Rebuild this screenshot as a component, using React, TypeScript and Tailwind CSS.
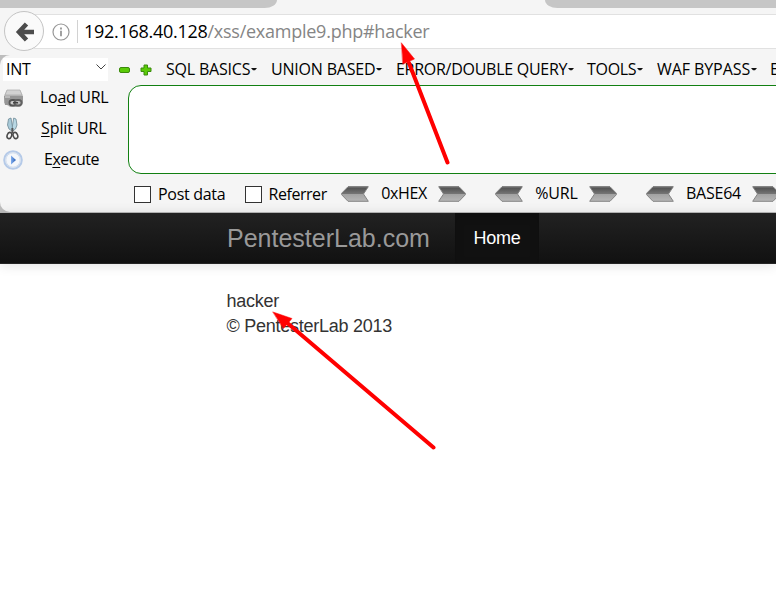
import React from "react";

const ui = "font-['Open_Sans','Noto_Sans',sans-serif] text-black whitespace-nowrap";

function Chevron({ flip = false, id }: { flip?: boolean; id: string }) {
  return (
    <svg width="28" height="16" viewBox="0 0 28 16" className={flip ? "shrink-0 -scale-x-100" : "shrink-0"}>
      <defs>
        <linearGradient id={id} x1="0" y1="0" x2="0" y2="1">
          <stop offset="0" stopColor="#4c4c4c" />
          <stop offset="0.48" stopColor="#747474" />
          <stop offset="0.52" stopColor="#a2a2a2" />
          <stop offset="1" stopColor="#b6b6b6" />
        </linearGradient>
      </defs>
      <path d="M7 .7H27.3L22.5 8l4.8 7.3H7L.6 8.700V7.300z" fill={`url(#${id})`} stroke="#858585" strokeWidth="1" />
      <path d="M7 1H27" stroke="#777" />
    </svg>
  );
}

function Encoder({ label, id, labelClass, className }: { label: string; id: string; labelClass: string; className: string }) {
  return (
    <div className={`flex shrink-0 items-center ${className}`}>
      <Chevron id={id + "l"} />
      <span className={`-mt-[2px] pl-px text-center ${labelClass}`}>{label}</span>
      <Chevron id={id + "r"} flip />
    </div>
  );
}

function Menu({ label, className }: { label: string; className: string }) {
  return (
    <div className={`flex shrink-0 items-center ${className}`}>
      <span>{label}</span>
      <svg width="6" height="3" viewBox="0 0 6 3" className="ml-px shrink-0">
        <path d="M0 0h6L4 2.200h-2z" fill="#111" />
      </svg>
    </div>
  );
}

function LoadIcon() {
  return (
    <svg width="21" height="19" viewBox="0 0 21 19" className="shrink-0">
      <path d="M4 1H17L20 7V15L17 18H7L1 14V7z" fill="#b8b8b8" />
      <path d="M4 1H17L19 6H2z" fill="#d2d2d2" stroke="#aaa" strokeWidth=".7" />
      <path d="M1 7H20V14L17 16H2z" fill="#969696" />
      <path d="M2 8H7" stroke="#dedede" strokeWidth="1.2" />
      <rect x="6.5" y="11" width="7" height="5.5" rx="2.700" fill="#ccc" stroke="#555" strokeWidth="1.8" />
      <rect x="11.500" y="11" width="7" height="5.5" rx="2.700" fill="#bbb" stroke="#606060" strokeWidth="1.8" />
      <path d="M10 13.700h5" stroke="#444" strokeWidth="1.5" />
    </svg>
  );
}

function ScissorsIcon() {
  return (
    <svg width="13" height="23" viewBox="0 0 13 23" className="shrink-0">
      <path d="M2.500 2 1.5 8 3 12 6 14 6.500 10 5 1z" fill="#a8cad9" stroke="#6d8996" strokeWidth=".8" />
      <path d="M10 2 11 8 9.500 12 6.800 14 6.300 10 7.700 1z" fill="#b9d8e4" stroke="#6d8996" strokeWidth=".8" />
      <path d="M6.4 11v5" stroke="#555" strokeWidth="2" />
      <ellipse cx="3.4" cy="18.5" rx="2.2" ry="3.2" fill="none" stroke="#4a4a4a" strokeWidth="1.6" transform="rotate(20 3.4 18.5)" />
      <ellipse cx="9.4" cy="18.5" rx="2.2" ry="3.2" fill="none" stroke="#4a4a4a" strokeWidth="1.6" transform="rotate(-20 9.4 18.5)" />
    </svg>
  );
}

function PlayIcon() {
  return (
    <svg width="20" height="20" viewBox="0 0 20 20" className="shrink-0">
      <defs>
        <linearGradient id="play" x1="0" y1="0" x2="1" y2="0">
          <stop offset="0" stopColor="#83aff0" />
          <stop offset="1" stopColor="#245bb0" />
        </linearGradient>
      </defs>
      <circle cx="10" cy="10" r="8.8" fill="#eef3fa" stroke="#b5cae8" strokeWidth="2" />
      <circle cx="10" cy="10" r="7.2" fill="#f4f7fb" stroke="#d0dcec" />
      <path d="M8 5.5v9l5-4.5z" fill="url(#play)" />
    </svg>
  );
}

export default function App() {
  return (
    <div className="relative flex h-[602px] w-[776px] flex-col overflow-hidden bg-white">
      {/* Browser tabs and address bar */}
      <div className="flex h-2 shrink-0 justify-between bg-[#f5f5f5]">
        <div className="w-[277px] rounded-br-[14px_9px] bg-[#c6c6c6]" />
        <div className="w-[231px] rounded-bl-[14px_9px] bg-[#c6c6c6]" />
      </div>
      <div className={`flex h-[47px] shrink-0 items-start bg-[#f5f5f5] ${ui}`}>
        <div className="z-10 ml-1 mt-[3px] flex size-10 shrink-0 items-center justify-center rounded-full border border-[#c4c4c4] bg-[#fafafa]">
          <svg width="20" height="20" viewBox="0 0 20 20" className="ml-px mt-px">
            <path d="M19 10H5M11.500 2 4 10l7.500 8" fill="none" stroke="#4c4c4c" strokeWidth="4.600" />
          </svg>
        </div>
        <div className="-ml-[10px] mt-[6px] flex h-[35px] flex-1 items-center border-y border-[#e1e1e1] bg-white pl-[18px]">
          <svg width="18" height="18" viewBox="0 0 18 18" className="shrink-0">
            <circle cx="9" cy="9" r="8" fill="none" stroke="#979797" strokeWidth="1.2" />
            <path d="M9 7.8v5.4M9 4.5v2" stroke="#979797" strokeWidth="1.8" />
          </svg>
          <div className="ml-[7px] h-[23px] w-px bg-[#d2d2d2]" />
          <span className="ml-[6px] text-[18px] tracking-[-0.28px]">192.168.40.128</span>
          <span className="text-[18px] tracking-[-0.25px] text-[#858585]">/xss/example9.php#hacker</span>
        </div>
      </div>

      {/* Hackbar */}
      <div className="shrink-0 bg-[#bdbdbd]">
        <div className={`flex h-[157px] flex-col overflow-hidden rounded-l-[10px] bg-[#f5f5f5] text-[16px] ${ui}`}>
          <div className="flex h-[30px] shrink-0 items-center pb-[2px]">
            <div className="ml-[3px] flex h-[23px] w-[105px] shrink-0 items-center justify-between bg-white pl-[2px] pr-[2px]">
              <span className="ml-px tracking-[-0.2px]">INT</span>
              <svg width="10" height="6" viewBox="0 0 10 6" className="mb-1">
                <path d="M.5.5 5 5 9.500.5" fill="none" stroke="#444" />
              </svg>
            </div>
            <svg width="11" height="6" viewBox="0 0 11 6" className="ml-[11px] mt-px shrink-0">
              <rect x=".5" y=".5" width="10" height="5" rx="1.5" fill="#5bcb08" stroke="#3b8a0c" />
            </svg>
            <svg width="12" height="12" viewBox="0 0 12 12" className="ml-[10px] mt-px shrink-0">
              <path d="M4 1h3.500v3H11v3.500H7.500V11H4V7.500H1V4h3z" fill="#5bcb08" stroke="#3b8a0c" strokeLinejoin="round" />
            </svg>
            <Menu label="SQL BASICS" className="ml-[14px] w-[105px] tracking-[-0.2px]" />
            <Menu label="UNION BASED" className="w-[125px] tracking-[-0.2px]" />
            <Menu label="ERROR/DOUBLE QUERY" className="w-[191px] tracking-[-0.27px]" />
            <Menu label="TOOLS" className="w-[70px] tracking-[-0.3px]" />
            <Menu label="WAF BYPASS" className="w-[113px] tracking-[-0.08px]" />
            <span>E</span>
          </div>
          <div className="flex h-[89px] shrink-0">
            <div className="flex w-32 shrink-0 flex-col">
              <div className="flex h-[27px] items-center pl-[3px]">
                <LoadIcon />
                <span className="-mt-[3px] ml-[16px] tracking-[-0.3px]">Lo<u className="underline-offset-2">a</u>d URL</span>
              </div>
              <div className="flex h-[33px] items-center pl-[6px]">
                <ScissorsIcon />
                <span className="-mt-px ml-[22px] tracking-[-0.1px]"><u className="underline-offset-2">S</u>plit URL</span>
              </div>
              <div className="flex h-[29px] items-center pl-[3px]">
                <PlayIcon />
                <span className="-mt-px ml-[21px] tracking-[-0.5px]">E<u className="underline-offset-2">x</u>ecute</span>
              </div>
            </div>
            <div className="-mr-4 flex-1 rounded-[13px] border border-[#128012] bg-white" />
          </div>
          <div className="flex h-[38px] shrink-0 items-center pt-[2px]">
            <span className="ml-[134px] size-[17px] shrink-0 border border-[#333] bg-white" />
            <span className="ml-[7px] w-[86.5px] shrink-0 tracking-[-0.3px]">Post data</span>
            <span className="size-[17px] shrink-0 border border-[#333] bg-white" />
            <span className="ml-[7px] w-[72.5px] shrink-0 tracking-[-0.45px]">Referrer</span>
            <Encoder id="hex" label="0xHEX" labelClass="w-[69px] tracking-[-0.4px]" className="" />
            <Encoder id="url" label="%URL" labelClass="w-[66px] tracking-[-0.2px]" className="ml-[29px]" />
            <Encoder id="base" label="BASE64" labelClass="w-[78px] tracking-[-0.25px]" className="ml-[29px]" />
          </div>
        </div>
        <div className="h-px bg-[#b9b9b9]" />
      </div>

      {/* Page content */}
      <div className="flex h-[51px] shrink-0 border-b border-[#252525] bg-linear-to-b from-[#222] to-[#111] font-['Liberation_Sans',Arial,sans-serif] shadow-[0_1px_12px_rgba(0,0,0,0.12)]">
        <span className="ml-[227px] w-[228px] pt-[7px] text-[25px] leading-[36px] text-[#999]">PentesterLab.com</span>
        <span className="w-[84px] bg-[#111] text-center text-[18px] leading-[50px] tracking-[-0.3px] text-white shadow-[inset_0_3px_10px_rgba(0,0,0,0.15)]">Home</span>
      </div>
      <div className="ml-[226.500px] mt-[25px] font-['Liberation_Sans',Arial,sans-serif] text-[18px] leading-[25px] tracking-[-0.25px] text-[#333]">
        <p>hacker</p>
        <p>© PentesterLab 2013</p>
      </div>

      {/* Annotation arrows */}
      <svg className="pointer-events-none absolute inset-0 z-20" width="776" height="602" viewBox="0 0 776 602">
        <g fill="red" stroke="red" strokeLinecap="round">
          <path d="M409 63 447.500 162.500M285 321 433.500 447.500" strokeWidth="4" />
          <path d="M401.500 43 414.500 59 403 64z" strokeWidth=".5" />
          <path d="M273 312 292 318.500 283.500 328.500z" strokeWidth=".5" />
        </g>
      </svg>
    </div>
  );
}
